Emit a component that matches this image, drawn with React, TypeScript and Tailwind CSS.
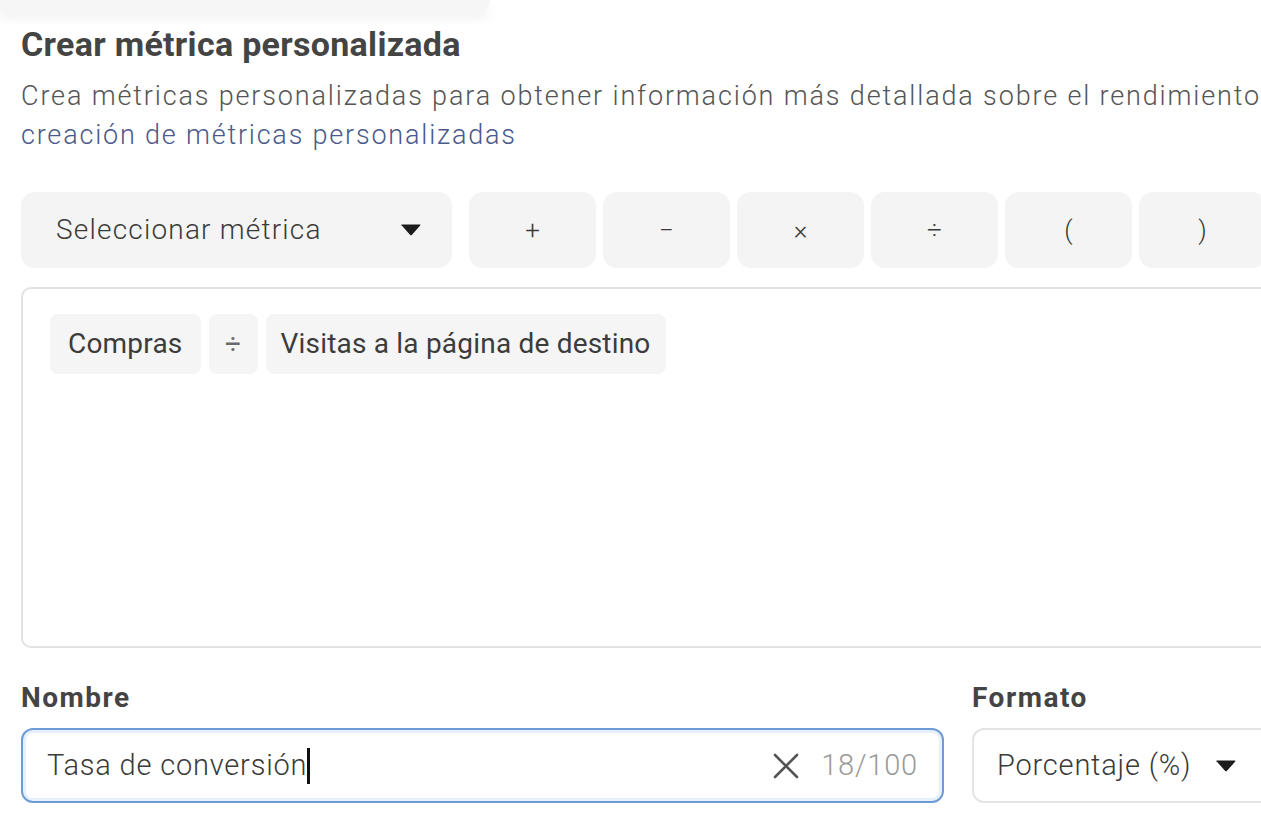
import React from 'react';

const font = { fontFamily: 'Roboto, "Liberation Sans", sans-serif' };

const Caret = () => (
  <svg width="22" height="12" viewBox="0 0 22 12" className="shrink-0">
    <path d="M1 1.5 Q1 0.5 2.2 0.5 H19.8 Q21 0.5 20.2 1.6 L12 10.8 Q11 11.8 10 10.8 L1.8 1.6 Z" fill="#1c1c1c" />
  </svg>
);

const OpButton = ({ label }: { label: string }) => (
  <div className="w-[127px] h-[76px] shrink-0 rounded-[14px] bg-[#f4f4f4] flex items-center justify-center text-[26px] text-[#3a3a3a] font-light">
    {label}
  </div>
);

const Chip = ({ children, className = '' }: { children: React.ReactNode; className?: string }) => (
  <div className={`h-[60px] rounded-[8px] bg-[#f5f5f5] flex items-center text-[28px] tracking-[0.2px] text-[#3c3c3c] ${className}`}>
    {children}
  </div>
);

export default function App() {
  return (
    <div className="w-[1261px] h-[816px] overflow-hidden bg-white" style={font}>
      {/* restos del popover de arriba */}
      <div className="w-[490px] h-[12px] bg-[#f6f6f6] rounded-br-[40px] shadow-[0_6px_12px_rgba(0,0,0,0.06)]" />

      <div className="w-[1360px] pl-[21px]">
        <h1 className="mt-[12px] text-[34px] leading-[40px] font-bold text-[#444] tracking-[0.3px]">
          Crear métrica personalizada
        </h1>
        <p className="mt-[13px] text-[27px] leading-[38px] font-light text-[#555] tracking-[1.85px] whitespace-nowrap">
          Crea métricas personalizadas para obtener información más detallada sobre el rendimiento de
        </p>
        <a className="block mt-[1px] text-[27px] leading-[38px] font-light text-[#4a5a8a] tracking-[1.8px]">
          creación de métricas personalizadas
        </a>

        <div className="mt-[38px] flex gap-[7px]">
          <div className="w-[431px] h-[76px] shrink-0 rounded-[14px] bg-[#f4f4f4] flex items-center justify-between pl-[35px] pr-[30px] text-[28px] tracking-[1.2px] text-[#3a3a3a] font-light">
            <span>Seleccionar métrica</span>
            <Caret />
          </div>
          <div className="w-[3px] shrink-0" />
          <OpButton label="+" />
          <OpButton label="−" />
          <OpButton label="×" />
          <OpButton label="÷" />
          <OpButton label="(" />
          <OpButton label=")" />
        </div>

        <div className="mt-[19px] h-[361px] rounded-[10px] border-2 border-[#e2e2e2] pt-[25px] pl-[27px] flex items-start gap-[8px]">
          <Chip className="px-[18px]">Compras</Chip>
          <Chip className="w-[49px] justify-center text-[#6a6a6a]">÷</Chip>
          <Chip className="px-[15px]">Visitas a la página de destino</Chip>
        </div>

        <div className="mt-[33px] flex gap-[28px]">
          <div className="w-[923px]">
            <div className="text-[28px] leading-[34px] font-bold text-[#444] tracking-[1.5px]">Nombre</div>
            <div className="mt-[13px] h-[75px] rounded-[12px] border-2 border-[#6e9bd6] shadow-[inset_0_0_0_3px_#e6f0fc] flex items-center pl-[24px] pr-[24px]">
              <span className="text-[29px] tracking-[0.8px] text-[#3a3a3a] font-light">Tasa de conversión</span>
              <span className="w-[3px] h-[36px] bg-[#111]" />
              <span className="flex-1" />
              <svg width="28" height="28" viewBox="0 0 28 28" className="mr-[21px]">
                <path d="M3 3 L25 25 M25 3 L3 25" stroke="#555" strokeWidth="2.6" strokeLinecap="round" />
              </svg>
              <span className="text-[29px] tracking-[0.8px] text-[#9a9a9a] font-light">18/100</span>
            </div>
          </div>
          <div className="w-[330px]">
            <div className="text-[28px] leading-[34px] font-bold text-[#444] tracking-[1.5px]">Formato</div>
            <div className="mt-[13px] h-[75px] rounded-[12px] border-2 border-[#e4e4e4] flex items-center pl-[23px]">
              <span className="text-[29px] tracking-[0.8px] text-[#3a3a3a] font-light">Porcentaje (%)</span>
              <span className="ml-[24px]"><Caret /></span>
            </div>
          </div>
        </div>
      </div>
    </div>
  );
}
